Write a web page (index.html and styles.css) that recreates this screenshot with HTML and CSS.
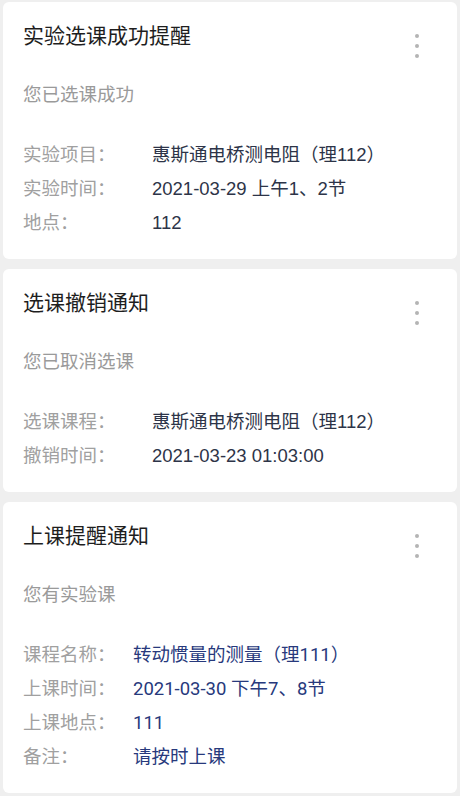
FILE: index.html
```html
<!DOCTYPE html>
<html lang="zh-CN">
<head>
    <meta charset="UTF-8">
    <meta name="viewport" content="width=device-width, initial-scale=1.0">
    <title>通知</title>
    <link rel="stylesheet" href="styles.css">
</head>
<body>
    <div class="card">
        <div class="card-head">
            <div class="title">实验选课成功提醒</div>
            <div class="more"><i></i><i></i><i></i></div>
        </div>
        <div class="sub">您已选课成功</div>
        <div class="rows">
            <div class="row"><span class="label">实验项目：</span><span class="value">惠斯通电桥测电阻（理112）</span></div>
            <div class="row"><span class="label">实验时间：</span><span class="value">2021-03-29 上午1、2节</span></div>
            <div class="row"><span class="label">地点：</span><span class="value">112</span></div>
        </div>
    </div>

    <div class="card">
        <div class="card-head">
            <div class="title">选课撤销通知</div>
            <div class="more"><i></i><i></i><i></i></div>
        </div>
        <div class="sub">您已取消选课</div>
        <div class="rows">
            <div class="row"><span class="label">选课课程：</span><span class="value">惠斯通电桥测电阻（理112）</span></div>
            <div class="row"><span class="label">撤销时间：</span><span class="value">2021-03-23 01:03:00</span></div>
        </div>
    </div>

    <div class="card card-blue">
        <div class="card-head">
            <div class="title">上课提醒通知</div>
            <div class="more"><i></i><i></i><i></i></div>
        </div>
        <div class="sub">您有实验课</div>
        <div class="rows">
            <div class="row"><span class="label">课程名称：</span><span class="value">转动惯量的测量（理111）</span></div>
            <div class="row"><span class="label">上课时间：</span><span class="value">2021-03-30 下午7、8节</span></div>
            <div class="row"><span class="label">上课地点：</span><span class="value">111</span></div>
            <div class="row"><span class="label">备注：</span><span class="value">请按时上课</span></div>
        </div>
    </div>
</body>
</html>
```

FILE: styles.css
```css
body {
    margin: 0;
    padding: 2px 3px;
    background: #efefef;
    font-family: "Liberation Sans", "Noto Sans CJK SC", sans-serif;
}
.card {
    background: #fff;
    border-radius: 6px;
    padding: 22px 20px 19px 20px;
    margin-bottom: 10px;
}
.card-head {
    display: flex;
    justify-content: space-between;
    align-items: flex-start;
    height: 24px;
}
.title {
    font-size: 21px;
    line-height: 24px;
    color: #1e1e1e;
}
.more {
    display: flex;
    flex-direction: column;
    gap: 6px;
    padding-top: 10px;
    margin-right: 18px;
}
.more i {
    width: 4px;
    height: 4px;
    border-radius: 50%;
    background: #b4b4b4;
}
.sub {
    margin-top: 35px;
    font-size: 18.5px;
    line-height: 24px;
    color: #9a9a9a;
}
.rows {
    margin-top: 31px;
}
.row {
    display: flex;
    font-size: 18.5px;
    line-height: 34px;
}
.label {
    width: 129px;
    flex-shrink: 0;
    color: #a0a0a0;
}
.value {
    color: #2d3448;
}
.card-blue .label { width: 110px; }
.card-blue .value {
    color: #27397c;
    font-family: Roboto, "Noto Sans CJK SC", sans-serif;
}
```
